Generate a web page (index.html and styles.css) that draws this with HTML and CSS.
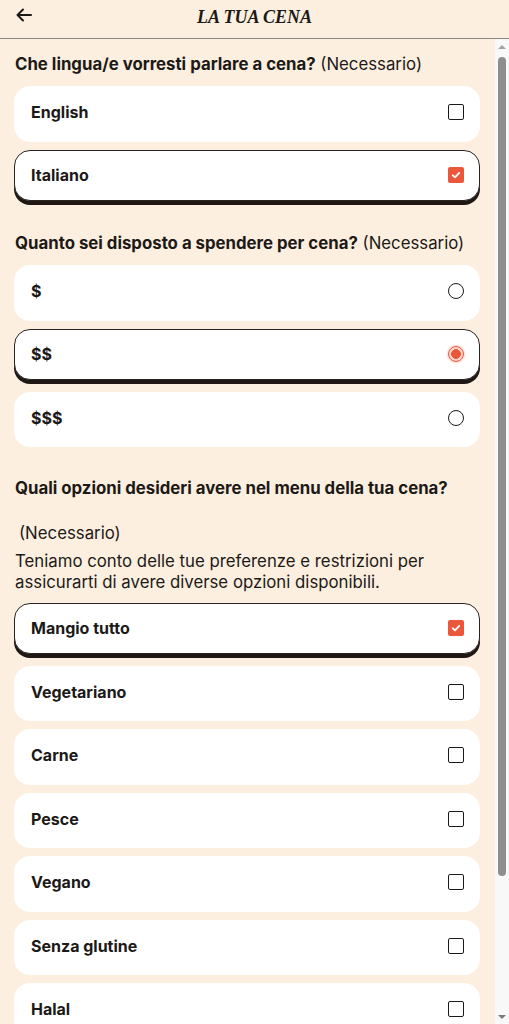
FILE: index.html
```html
<!DOCTYPE html>
<html lang="it">
<head>
<meta charset="utf-8">
<title>La tua cena</title>
<link rel="stylesheet" href="styles.css">
</head>
<body>
<div class="app">
  <header class="topbar">
    <button class="back" aria-label="Indietro">
      <svg width="16" height="14" viewBox="0 0 16 14" fill="none" stroke="#1c1917" stroke-width="2" stroke-linecap="round" stroke-linejoin="round"><path d="M15 7H2"/><path d="M7 1.5L1.5 7L7 12.5"/></svg>
    </button>
    <h1 class="title">LA TUA CENA</h1>
  </header>
  <div class="viewport">
    <main class="scroll">
      <section class="group">
        <p class="question"><strong>Che lingua/e vorresti parlare a cena?</strong> (Necessario)</p>
        <div class="options">
          <div class="card"><span class="label">English</span><span class="check"></span></div>
          <div class="card selected"><span class="label">Italiano</span><span class="check on"><svg width="16" height="16" viewBox="0 0 16 16" fill="none" stroke="#fff" stroke-width="1.8" stroke-linecap="round" stroke-linejoin="round"><path d="M4.8 8.3L7 10.4L11.2 5.9"/></svg></span></div>
        </div>
      </section>
      <section class="group">
        <p class="question"><strong>Quanto sei disposto a spendere per cena?</strong> (Necessario)</p>
        <div class="options">
          <div class="card"><span class="label">$</span><span class="radio"></span></div>
          <div class="card selected"><span class="label">$$</span><span class="radio on"></span></div>
          <div class="card"><span class="label">$$$</span><span class="radio"></span></div>
        </div>
      </section>
      <section class="group group-menu">
        <p class="question"><strong>Quali opzioni desideri avere nel menu della tua cena?</strong></p>
        <p class="required">(Necessario)</p>
        <p class="hint">Teniamo conto delle tue preferenze e restrizioni per assicurarti di avere diverse opzioni disponibili.</p>
        <div class="options">
          <div class="card selected"><span class="label">Mangio tutto</span><span class="check on"><svg width="16" height="16" viewBox="0 0 16 16" fill="none" stroke="#fff" stroke-width="1.8" stroke-linecap="round" stroke-linejoin="round"><path d="M4.8 8.3L7 10.4L11.2 5.9"/></svg></span></div>
          <div class="card"><span class="label">Vegetariano</span><span class="check"></span></div>
          <div class="card"><span class="label">Carne</span><span class="check"></span></div>
          <div class="card"><span class="label">Pesce</span><span class="check"></span></div>
          <div class="card"><span class="label">Vegano</span><span class="check"></span></div>
          <div class="card"><span class="label">Senza glutine</span><span class="check"></span></div>
          <div class="card"><span class="label">Halal</span><span class="check"></span></div>
          <div class="card"><span class="label">Kosher</span><span class="check"></span></div>
        </div>
      </section>
    </main>
    <div class="scrollbar" aria-hidden="true">
      <span class="sb-btn sb-up"></span>
      <span class="sb-track"><span class="sb-thumb"></span></span>
      <span class="sb-btn sb-down"></span>
    </div>
  </div>
</div>
</body>
</html>
```
FILE: styles.css
```css
* { box-sizing: border-box; }
html, body { margin: 0; padding: 0; height: 100%; }
body {
  background: #fcefdf;
  color: #1c1917;
  font-family: Inter, "Noto Sans", "Liberation Sans", sans-serif;
  font-size: 16px;
  overflow: hidden;
}
.app {
  height: 100vh;
  display: flex;
  flex-direction: column;
}
.topbar {
  flex: 0 0 auto;
  height: 39px;
  border-bottom: 1px solid #8d8781;
  display: flex;
  align-items: center;
  justify-content: center;
  position: relative;
}
.back {
  position: absolute;
  left: 16px;
  top: 8px;
  border: 0;
  background: none;
  padding: 0;
  width: 16px;
  height: 14px;
  display: flex;
}
.title {
  margin: 0;
  font-family: "Liberation Serif", "Times New Roman", serif;
  font-style: italic;
  font-weight: 700;
  font-size: 18px;
  color: #1c1917;
  position: relative;
  top: -2px;
}
.viewport {
  flex: 1 1 auto;
  min-height: 0;
  display: flex;
}
.scroll {
  flex: 1 1 auto;
  min-width: 0;
  overflow: hidden;
  padding: 13px 15px 82px 14px;
}
.scrollbar {
  flex: 0 0 14px;
  background: #f8f8f8;
  display: flex;
  flex-direction: column;
}
.sb-btn {
  flex: 0 0 15px;
  display: flex;
  align-items: center;
  justify-content: center;
}
.sb-btn::before {
  content: "";
  width: 0;
  height: 0;
  border-left: 4px solid transparent;
  border-right: 4px solid transparent;
}
.sb-up::before { border-bottom: 4px solid #a3a3a3; margin-top: 0; }
.sb-down::before { border-top: 4px solid #7a7a7a; }
.sb-track {
  flex: 1 1 auto;
  display: flex;
  flex-direction: column;
  align-items: center;
  padding-top: 3px;
}
.sb-thumb {
  width: 8px;
  height: 819px;
  border-radius: 4px;
  background: #8e8e8e;
}
.group + .group { margin-top: 26.5px; }
.group + .group-menu { margin-top: 28.5px; }
.question {
  margin: 0 0 10px;
  font-size: 16.8px;
  line-height: 24px;
  padding-left: 1px;
}
.question strong { font-weight: 700; }
.required {
  margin: 21px 0 0;
  font-size: 16.8px;
  line-height: 24px;
  padding-left: 5px;
}
.hint {
  margin: 6px 0 10px;
  font-size: 16.8px;
  line-height: 21px;
  padding-left: 1px;
}
.group-menu .question { margin-bottom: 0; }
.options {
  display: flex;
  flex-direction: column;
  gap: 8px;
}
.card {
  height: 55.5px;
  background: #fff;
  border-radius: 16px;
  display: flex;
  align-items: center;
  justify-content: space-between;
  padding: 0 16px 3px 17px;
}
.card.selected {
  height: 51px;
  margin-bottom: 4px;
  border: 1px solid #2a2320;
  box-shadow: 0 4px 0 #1e1714;
  padding: 0 15px 1px 16px;
}
.label { font-weight: 700; }
.check {
  width: 16px;
  height: 16px;
  border: 1.5px solid #1c1917;
  border-radius: 2px;
  display: flex;
}
.check.on {
  border: 0;
  background: #ea573b;
}
.radio {
  width: 16px;
  height: 16px;
  border: 1.5px solid #1c1917;
  border-radius: 50%;
}
.radio.on {
  border-color: #ea573b;
  background: radial-gradient(circle, #ea573b 0 4.6px, #fbd5cb 5px 100%);
  box-shadow: 0 0 0 1.5px #fde4dc;
}
```
